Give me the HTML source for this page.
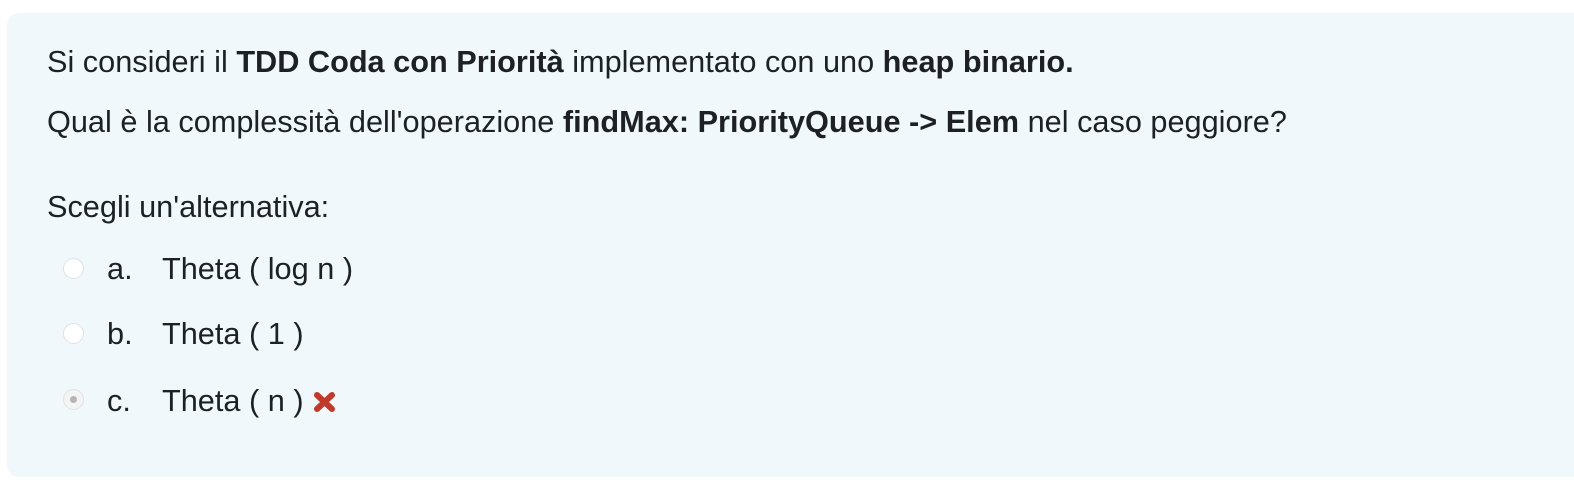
<html><head><style>
body{margin:0;background:#fff;width:1574px;height:486px;overflow:hidden;font-family:"Liberation Sans",sans-serif;color:#1d2125;font-size:30.7px}
.box{position:absolute;left:7px;top:13px;width:1580px;height:464px;background:#f0f8fc;border-radius:12px}
.t{position:absolute;white-space:nowrap;line-height:1}
b{font-weight:bold}
.r{position:absolute;left:63px;width:21px;height:21px;border-radius:50%;border:1px solid #dee2e6;background:#fff;box-sizing:border-box}
.r.c{background:#f4f4f4}
.r.c::after{content:"";position:absolute;left:6px;top:6px;width:7px;height:7px;border-radius:50%;background:#b5b5b5}
</style></head><body>
<div class="box"></div>
<div class="t" style="left:47px;top:47px">Si consideri il <b>TDD Coda con Priorità</b> implementato con uno <b>heap binario.</b></div>
<div class="t" style="left:47px;top:107px">Qual è la complessità dell'operazione <b>findMax: PriorityQueue -&gt; Elem</b> nel caso peggiore?</div>
<div class="t" style="left:47px;top:192px">Scegli un'alternativa:</div>
<div class="r" style="top:258px"></div><div class="t" style="left:107px;top:254px">a.</div><div class="t" style="left:162px;top:254px">Theta ( log n )</div>
<div class="r" style="top:323px"></div><div class="t" style="left:107px;top:319px">b.</div><div class="t" style="left:162px;top:319px">Theta ( 1 )</div>
<div class="r c" style="top:389px"></div><div class="t" style="left:107px;top:386px">c.</div><div class="t" style="left:162px;top:386px">Theta ( n )</div>
<svg style="position:absolute;left:313px;top:391px" width="23" height="22" viewBox="0 0 23 22"><path d="M4 4L19 18M19 4L4 18" stroke="#c0392b" stroke-width="6" stroke-linecap="round"/></svg>
</body></html>
